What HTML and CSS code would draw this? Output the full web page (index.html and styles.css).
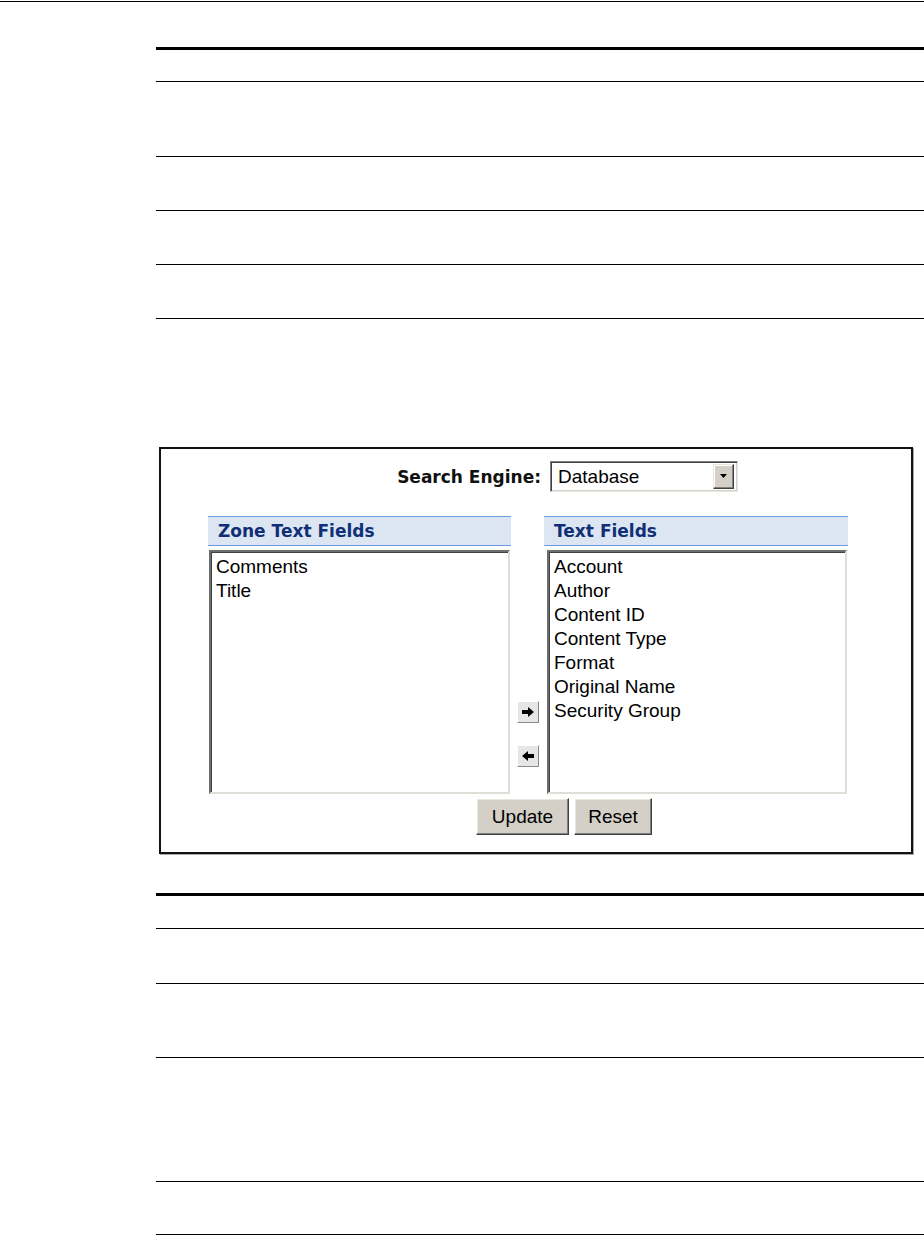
FILE: index.html
```html
<!DOCTYPE html>
<html lang="en">
<head>
    <meta charset="UTF-8">
    <title>Zone Text Fields</title>
    <link rel="stylesheet" href="styles.css">
</head>
<body>
    <div class="page-rule"></div>

    <div class="content">
        <!-- table above the figure (text removed) -->
        <div class="doc-table first-table">
            <div class="doc-row row-head"></div>
            <div class="doc-row row-double"></div>
            <div class="doc-row row-single"></div>
            <div class="doc-row row-single"></div>
            <div class="doc-row row-single"></div>
        </div>

        <!-- screenshot of the Zone Fields page -->
        <div class="figure">
            <div class="search-row">
                <span class="search-label">Search Engine:</span>
                <div class="dropdown">
                    <span class="dropdown-value">Database</span>
                    <span class="dropdown-btn">
                        <svg width="8" height="5" viewBox="0 0 8 5"><path d="M0 0h7L3.5 4z" fill="#000"/></svg>
                    </span>
                </div>
            </div>

            <div class="fields">
                <div class="field-col">
                    <div class="field-head">Zone Text Fields</div>
                    <div class="listbox listbox-left">
                        <div class="list-item">Comments</div>
                        <div class="list-item">Title</div>
                    </div>
                </div>

                <div class="move-col">
                    <button class="move-btn" title="Add">
                        <svg width="12" height="10" viewBox="0 0 12 10"><path d="M0 3h6V0l6 5-6 5V7H0z" fill="#000"/></svg>
                    </button>
                    <button class="move-btn" title="Remove">
                        <svg width="12" height="10" viewBox="0 0 12 10"><path d="M12 3H6V0L0 5l6 5V7h6z" fill="#000"/></svg>
                    </button>
                </div>

                <div class="field-col">
                    <div class="field-head">Text Fields</div>
                    <div class="listbox listbox-right">
                        <div class="list-item">Account</div>
                        <div class="list-item">Author</div>
                        <div class="list-item">Content ID</div>
                        <div class="list-item">Content Type</div>
                        <div class="list-item">Format</div>
                        <div class="list-item">Original Name</div>
                        <div class="list-item">Security Group</div>
                    </div>
                </div>
            </div>

            <div class="actions">
                <button class="btn btn-update">Update</button>
                <button class="btn btn-reset">Reset</button>
            </div>
        </div>

        <!-- table below the figure -->
        <div class="doc-table second-table">
            <div class="doc-row row-head2"></div>
            <div class="doc-row row-single2"></div>
            <div class="doc-row row-double2"></div>
            <div class="doc-row row-quad"></div>
            <div class="doc-row row-last"></div>
        </div>
    </div>
</body>
</html>
```

FILE: styles.css
```css
/* page */

body {
    margin: 0;
    background-color: #fff;
    font-family: "Liberation Sans", Arial, sans-serif;
    color: #000;
}

.page-rule {
    margin-top: 1px;
    height: 1px;
    background-color: #000;
}

.content {
    margin-left: 156px;
}

/* ruled tables */

.doc-table {
    border-top: 3px solid #000;
}

.first-table {
    margin-top: 45px;
}

.second-table {
    margin-top: 39px;
}

.doc-row {
    border-bottom: 1px solid #000;
}

.row-head { height: 31px; }
.row-double { height: 74px; }
.row-single { height: 53px; }

.row-head2 { height: 32px; }
.row-single2 { height: 54px; }
.row-double2 { height: 73px; }
.row-quad { height: 123px; }
.row-last { height: 52px; }

/* figure frame */

.figure {
    box-sizing: border-box;
    width: 754px;
    margin: 128px 0 0 3px;
    padding: 12px 0 17px 0;
    border: 2px solid #111;
    box-shadow: 1px 1px 0 #aaa;
}

/* search engine row */

.search-row {
    display: grid;
    grid-template-columns: 380px 188px;
    column-gap: 9px;
    align-items: center;
}

.search-label {
    text-align: right;
    font-family: "DejaVu Sans", Verdana, sans-serif;
    font-weight: bold;
    font-size: 17px;
    color: #111;
}

.dropdown {
    box-sizing: border-box;
    height: 31px;
    display: flex;
    align-items: center;
    justify-content: space-between;
    background-color: #fff;
    border: 1px solid;
    border-color: #808080 #e8e6e0 #e8e6e0 #808080;
    box-shadow: inset 1px 1px 0 #404040, inset -1px -1px 0 #d4d0c8;
    padding: 0 3px 0 7px;
}

.dropdown-value {
    font-size: 19px;
}

.dropdown-btn {
    box-sizing: border-box;
    width: 21px;
    height: 25px;
    display: flex;
    align-items: center;
    justify-content: center;
    background-color: #d4d0c8;
    border: 1px solid;
    border-color: #e8e6e0 #404040 #404040 #e8e6e0;
    box-shadow: inset -1px -1px 0 #808080, inset 1px 1px 0 #fff;
}

/* field lists */

.fields {
    display: grid;
    grid-template-columns: 303px 33px 304px;
    margin: 24px 0 0 47px;
}

.field-head {
    height: 28px;
    line-height: 28px;
    padding-left: 10px;
    background-color: #dce6f2;
    border-top: 1px solid #6a9de4;
    border-bottom: 1px solid #6a9de4;
    font-family: "DejaVu Sans", Verdana, sans-serif;
    font-weight: bold;
    font-size: 17px;
    color: #102f76;
}

.listbox {
    box-sizing: border-box;
    height: 244px;
    margin-top: 4px;
    padding: 3px 5px;
    background-color: #fff;
    border: 2px solid;
    border-color: #6e6e6e #e0ded8 #e0ded8 #6e6e6e;
    box-shadow: inset 1px 1px 0 #404040;
}

.listbox-left {
    width: 301px;
    margin-left: 1px;
}

.listbox-right {
    width: 300px;
    margin-left: 3px;
}

.list-item {
    font-size: 19px;
    line-height: 24px;
    white-space: nowrap;
}

.move-col {
    display: flex;
    flex-direction: column;
    gap: 22px;
    padding: 185px 0 0 6px;
}

.move-btn {
    box-sizing: border-box;
    width: 22px;
    height: 22px;
    padding: 0;
    display: flex;
    align-items: center;
    justify-content: center;
    background-color: #e6e6e6;
    border: 1px solid;
    border-color: #fff #8a8a8a #8a8a8a #fff;
}

/* buttons */

.actions {
    display: flex;
    gap: 5px;
    margin: 4px 0 0 315px;
}

.btn {
    box-sizing: border-box;
    height: 37px;
    padding: 0;
    font-family: "Liberation Sans", Arial, sans-serif;
    font-size: 19px;
    color: #000;
    background-color: #d4d0c8;
    border: 1px solid;
    border-color: #fff #404040 #404040 #fff;
    box-shadow: inset -1px -1px 0 #808080, inset 1px 1px 0 #e8e6e0;
}

.btn-update {
    width: 93px;
}

.btn-reset {
    width: 78px;
}
```
